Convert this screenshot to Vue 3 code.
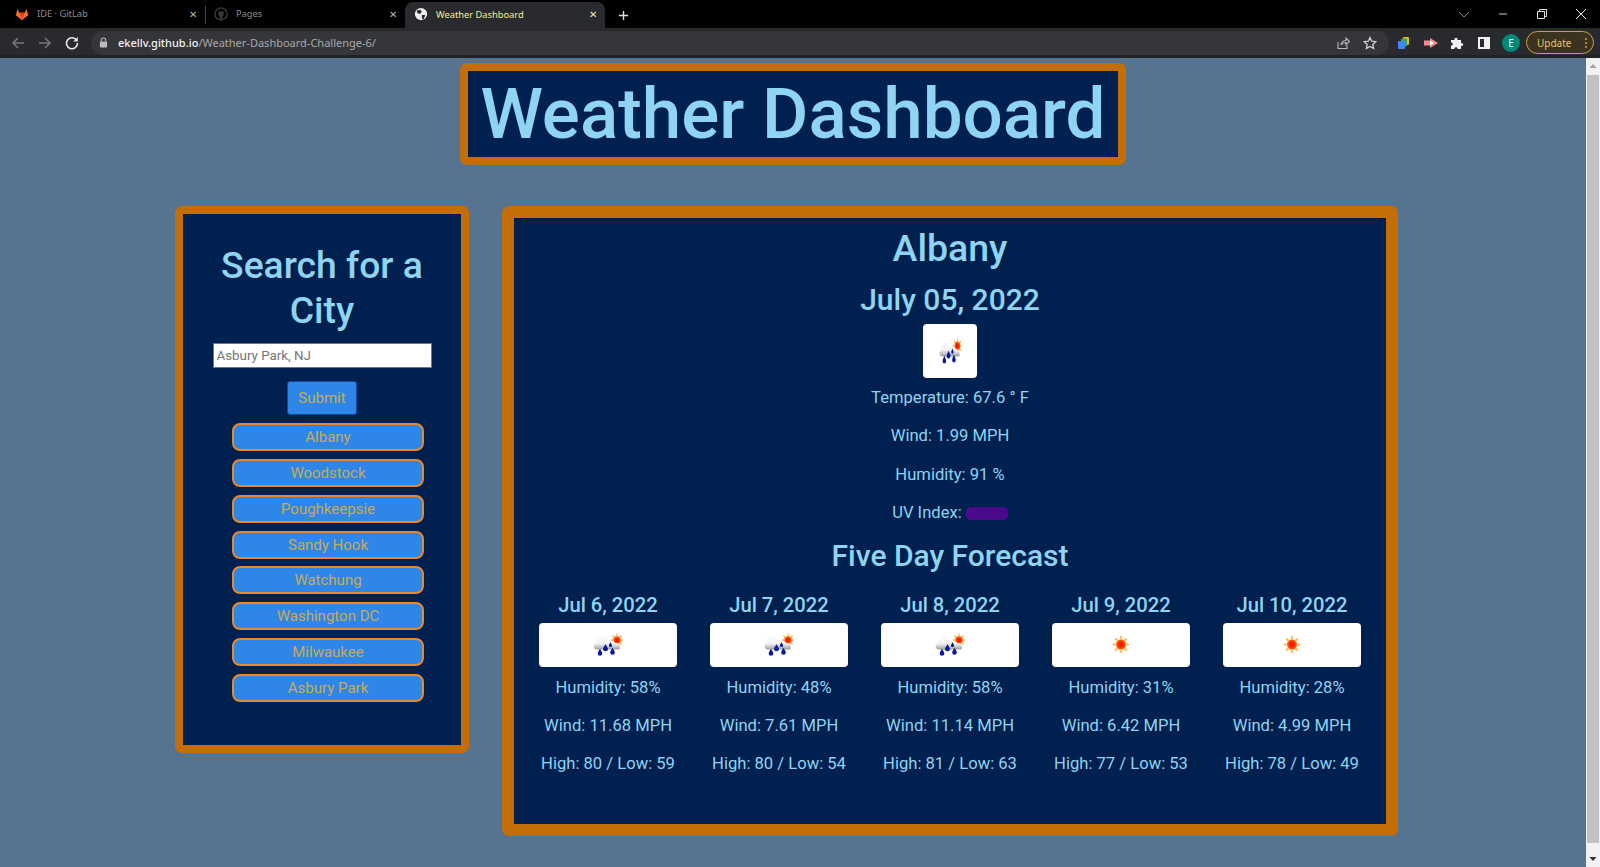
<template>
  <div class="window">
    <svg class="defs" width="0" height="0">
      <defs>
        <radialGradient id="sunFill">
          <stop offset="0.4" stop-color="#f51a00" />
          <stop offset="1" stop-color="#ff7a00" />
        </radialGradient>
        <linearGradient id="cloudFill" x1="0" y1="0" x2="0" y2="1">
          <stop offset="0" stop-color="#ffffff" />
          <stop offset="0.6" stop-color="#f0f0f0" />
          <stop offset="1" stop-color="#9c9c9c" />
        </linearGradient>
        <symbol id="sun" viewBox="0 0 18 18" preserveAspectRatio="none">
          <g fill="#ffb040">
            <path v-for="a in rays" :key="a" d="M9 0 L7.500 3.400 L10.500 3.400 Z" :transform="`rotate(${a} 9 9)`" />
          </g>
          <circle cx="9" cy="9" r="5" fill="url(#sunFill)" />
        </symbol>
        <symbol id="rain" viewBox="0 0 30 24" preserveAspectRatio="none">
          <g fill="#ffb040">
            <path v-for="a in rays" :key="a" d="M24 0 L22.800 2.800 L25.200 2.800 Z" :transform="`rotate(${a} 24 7)`" />
          </g>
          <circle cx="24" cy="7" r="3.800" fill="url(#sunFill)" />
          <path d="M4 16.500 C0 16.500 -0.500 11 3 10 C3 5 8 1 12 3 C14 4 15 6 15 8 C18 7 21 8 22 10 C26 10 28 13 26.500 16.500 Z" fill="url(#cloudFill)" />
          <g fill="#0a1a9c">
            <path d="M7 15.500 C7.500 17.500 9.300 18.500 9.300 20.500 C9.300 23.500 4.700 23.500 4.700 20.500 C4.700 18.500 6.500 17.500 7 15.500 Z" />
            <path d="M12.500 11 C13 13 15 14 15 16 C15 19 10 19 10 16 C10 14 12 13 12.500 11 Z" />
            <path d="M17.500 9 C17.800 10.500 19 11 19 12.500 C19 14.500 16 14.500 16 12.500 C16 11 17.200 10.500 17.500 9 Z" />
            <path d="M19.500 14.500 C20 16.500 21.800 17.500 21.800 19.500 C21.800 22.500 17.200 22.500 17.200 19.500 C17.200 17.500 19 16.500 19.500 14.500 Z" />
          </g>
        </symbol>
      </defs>
    </svg>

    <header class="chrome">
      <div class="tabstrip">
        <div class="tab">
          <svg class="favicon" viewBox="0 0 16 16">
            <path d="M8 15 L1 9.500 L2.800 2 L4.800 6.500 H11.200 L13.200 2 L15 9.500 Z" fill="#fc6d26" />
            <path d="M8 15 L4.800 6.500 H11.200 Z" fill="#e24329" />
          </svg>
          <span class="tab-title">IDE · GitLab</span>
          <span class="tab-close">✕</span>
        </div>
        <div class="tab-sep"></div>
        <div class="tab">
          <svg class="favicon" viewBox="0 0 16 16">
            <circle cx="8" cy="8" r="7" fill="none" stroke="#3a3a3a" stroke-width="1.600" />
            <path d="M5 4.500 L6.500 5.500 H9.500 L11 4.500 V7 C11.500 9 10 10.500 9.500 10.500 V14 H6.500 V10.500 C6 10.500 4.500 9 5 7 Z" fill="#3a3a3a" />
          </svg>
          <span class="tab-title">Pages</span>
          <span class="tab-close">✕</span>
        </div>
        <div class="tab active">
          <svg class="favicon" viewBox="0 0 16 16">
            <circle cx="8" cy="8" r="7" fill="#f1f1f1" />
            <path d="M3 4 L7 3 L9 5 L7 8 L4 7 Z M9 9 L13 9 L11 14 L9 13 Z" fill="#292929" />
          </svg>
          <span class="tab-title">Weather Dashboard</span>
          <span class="tab-close">✕</span>
        </div>
        <svg class="new-tab" viewBox="0 0 12 12"><path d="M6 1 V11 M1 6 H11" stroke="#e0e0e0" stroke-width="1.500" /></svg>
        <div class="window-controls">
          <svg viewBox="0 0 12 12"><path d="M1 4 L6 9 L11 4" fill="none" stroke="#8a8a8a" stroke-width="1" /></svg>
          <svg viewBox="0 0 12 12"><path d="M2 6 H10" stroke="#d0d0d0" stroke-width="1" /></svg>
          <svg viewBox="0 0 12 12"><path d="M1.500 3.500 H8.500 V10.500 H1.500 Z M3.500 3.500 V1.500 H10.500 V8.500 H8.500" fill="none" stroke="#e0e0e0" stroke-width="1" /></svg>
          <svg viewBox="0 0 12 12"><path d="M1 1 L11 11 M11 1 L1 11" stroke="#e8e8e8" stroke-width="1" /></svg>
        </div>
      </div>
      <div class="toolbar">
        <svg class="nav" viewBox="0 0 14 14"><path d="M13 7 H2 M7 2 L2 7 L7 12" fill="none" stroke="#777" stroke-width="1.500" /></svg>
        <svg class="nav" viewBox="0 0 14 14"><path d="M1 7 H12 M7 2 L12 7 L7 12" fill="none" stroke="#777" stroke-width="1.500" /></svg>
        <svg class="nav" viewBox="0 0 14 14"><path d="M11.800 4.500 A5.500 5.500 0 1 0 12.500 7" fill="none" stroke="#e8e8e8" stroke-width="1.600" /><path d="M12.800 1 V5.500 H8.300 Z" fill="#e8e8e8" /></svg>
        <div class="omnibox">
          <svg class="lock" viewBox="0 0 10 12"><path d="M2.500 5 V3.500 A2.500 2.500 0 0 1 7.500 3.500 V5" fill="none" stroke="#bbb" stroke-width="1.200" /><rect x="1" y="5" width="8" height="6.500" rx="1" fill="#bbb" /></svg>
          <span class="url"><b>ekellv.github.io</b>/Weather-Dashboard-Challenge-6/</span>
          <svg class="omni-icon share" viewBox="0 0 14 14"><path d="M2 6 V12.500 H11 V9 M5 9 C5.500 6 8 4.500 10 4.500 V2 L13.500 5.500 L10 8.500 V6.500 C8 6.500 6 7.500 5 9 Z" fill="none" stroke="#b8b8b8" stroke-width="1.100" /></svg>
          <svg class="omni-icon" viewBox="0 0 14 14"><path d="M7 1.500 L8.700 5.200 L12.800 5.700 L9.800 8.400 L10.600 12.400 L7 10.400 L3.400 12.400 L4.200 8.400 L1.200 5.700 L5.300 5.200 Z" fill="none" stroke="#d0d0d0" stroke-width="1.300" /></svg>
        </div>
        <div class="extensions">
          <svg viewBox="0 0 14 14">
            <rect x="6" y="1" width="6" height="8" rx="1" fill="#f2b90f" />
            <rect x="4" y="2.500" width="6" height="8" rx="1" fill="#34a853" />
            <rect x="1" y="5" width="7" height="8" rx="1" fill="#4285f4" />
          </svg>
          <svg viewBox="0 0 14 14"><path d="M0 4.500 H6 L6 2 L14 7 L6 12 V9.500 H0 Z" fill="#f28b8b" /><path d="M6 4.500 L10 7 L6 9.500 Z" fill="#fff" /></svg>
          <svg viewBox="0 0 14 14"><path d="M1 4 H4.500 C4 1 8 1 7.500 4 H11 V7 C14 6.500 14 10.500 11 10 V13 H7.500 C8 10.500 4 10.500 4.500 13 H1 V9.500 C3.500 10 3.500 6 1 6.500 Z" fill="#f1f1f1" /></svg>
          <svg viewBox="0 0 14 14"><rect x="1" y="1" width="12" height="12" fill="#f1f1f1" /><rect x="3" y="3" width="4" height="8" fill="#292a2d" /></svg>
          <span class="avatar">E</span>
        </div>
        <div class="update">
          <span>Update</span>
          <span class="dots"><i></i><i></i><i></i></span>
        </div>
      </div>
    </header>

    <div class="viewport">
      <main class="page">
        <h1 class="title">Weather Dashboard</h1>
        <div class="panels">
          <aside class="panel search">
            <h2 class="search-title">Search for a City</h2>
            <input class="city-input" type="text" placeholder="Asbury Park, NJ" />
            <button class="submit" type="button">Submit</button>
            <div class="history">
              <button v-for="city in cities" :key="city" class="city" type="button">{{ city }}</button>
            </div>
          </aside>
          <section class="panel weather">
            <h2 class="city-name">Albany</h2>
            <h3 class="today">July 05, 2022</h3>
            <div class="icon-box square"><svg class="wx"><use href="#rain" /></svg></div>
            <p>Temperature: 67.6 ° F</p>
            <p>Wind: 1.99 MPH</p>
            <p>Humidity: 91 %</p>
            <p>UV Index: <span class="uv"></span></p>
            <h3 class="five-day">Five Day Forecast</h3>
            <div class="forecast">
              <div v-for="day in days" :key="day.date" class="day">
                <h4>{{ day.date }}</h4>
                <div class="icon-box"><svg class="wx" :class="day.kind"><use :href="'#' + day.kind" /></svg></div>
                <p>Humidity: {{ day.humidity }}%</p>
                <p>Wind: {{ day.wind }} MPH</p>
                <p>High: {{ day.high }} / Low: {{ day.low }}</p>
              </div>
            </div>
          </section>
        </div>
      </main>
      <div class="scrollbar">
        <svg class="arrow" viewBox="0 0 14 17"><path d="M3.500 10 L7 6 L10.500 10 Z" fill="#a0a0a0" /></svg>
        <div class="thumb"></div>
        <svg class="arrow down" viewBox="0 0 14 17"><path d="M3.500 7 L7 11 L10.500 7 Z" fill="#303030" /></svg>
      </div>
    </div>
  </div>
</template>

<script setup>
const rays = [0, 45, 90, 135, 180, 225, 270, 315]

const cities = ['Albany', 'Woodstock', 'Poughkeepsie', 'Sandy Hook', 'Watchung', 'Washington DC', 'Milwaukee', 'Asbury Park']

const days = [
  { date: 'Jul 6, 2022', kind: 'rain', humidity: 58, wind: '11.68', high: 80, low: 59 },
  { date: 'Jul 7, 2022', kind: 'rain', humidity: 48, wind: '7.61', high: 80, low: 54 },
  { date: 'Jul 8, 2022', kind: 'rain', humidity: 58, wind: '11.14', high: 81, low: 63 },
  { date: 'Jul 9, 2022', kind: 'sun', humidity: 31, wind: '6.42', high: 77, low: 53 },
  { date: 'Jul 10, 2022', kind: 'sun', humidity: 28, wind: '4.99', high: 78, low: 49 }
]
</script>

<style>
html, body {
  margin: 0;
  overflow: hidden;
}
</style>

<style scoped>
.window {
  width: 1600px;
  height: 867px;
  display: flex;
  flex-direction: column;
  overflow: hidden;
  font-family: Roboto, "Liberation Sans", sans-serif;
}
.defs {
  position: absolute;
}

/* browser chrome */
.chrome {
  flex: none;
  height: 58px;
  background: #292a2d;
  border-bottom: 3px solid #222;
  box-sizing: border-box;
  font-family: "Noto Sans", "Liberation Sans", sans-serif;
}
.tabstrip {
  height: 28px;
  background: #000;
  display: flex;
  align-items: flex-end;
}
.tab {
  width: 200px;
  height: 26px;
  box-sizing: border-box;
  padding: 0 8px 3px 15px;
  display: flex;
  align-items: center;
  gap: 8px;
  color: #8f8f8f;
  font-size: 9.300px;
}
.tab:first-child {
  width: 205px;
}
.tab:nth-child(3) {
  width: 199px;
  padding-left: 8px;
}
.tab.active {
  width: 200px;
  padding: 0 8px 2px 9px;
  background: #292a2d;
  border-radius: 8px 8px 0 0;
  color: #f4ec9c;
}
.tab-sep {
  width: 1px;
  height: 18px;
  margin-bottom: 4px;
  background: #4a4a4a;
}
.favicon {
  width: 14px;
  height: 14px;
  flex: none;
}
.tab-title {
  flex: 1;
  white-space: nowrap;
}
.tab-close {
  font-size: 10px;
  color: #b5b5b5;
}
.active .tab-close {
  color: #f4ec9c;
}
.new-tab {
  width: 11px;
  height: 11px;
  margin: 0 0 7px 13px;
}
.window-controls {
  margin-left: auto;
  align-self: center;
  display: flex;
  gap: 27px;
  padding-right: 13px;
}
.window-controls svg {
  width: 12px;
  height: 12px;
}
.toolbar {
  height: 27px;
  padding: 2px 0 0 11px;
  box-sizing: border-box;
  display: flex;
  align-items: center;
}
.nav {
  width: 14px;
  height: 14px;
  margin-right: 13px;
}
.omnibox {
  width: 1298px;
  height: 24px;
  margin-left: -1px;
  box-sizing: border-box;
  padding: 0 12px 0 8px;
  background: #35363a;
  border-radius: 12px;
  display: flex;
  align-items: center;
  gap: 8px;
}
.lock {
  width: 9px;
  height: 11px;
}
.url {
  flex: 1;
  margin-left: 2px;
  font-size: 11px;
  color: #a8a8a8;
  white-space: nowrap;
}
.url b {
  font-weight: 500;
  color: #f2f2f2;
}
.omni-icon {
  width: 14px;
  height: 14px;
}
.omni-icon.share {
  margin-right: 5px;
}
.extensions {
  margin-left: 8px;
  display: flex;
  align-items: center;
  gap: 12.500px;
}
.extensions svg {
  width: 14px;
  height: 14px;
}
.avatar {
  width: 18px;
  height: 18px;
  margin-left: -1px;
  border-radius: 50%;
  background: #00897b;
  color: #e6f5f2;
  font-size: 10px;
  line-height: 18px;
  text-align: center;
}
.update {
  width: 68px;
  height: 23px;
  margin-left: 6px;
  box-sizing: border-box;
  border: 1px solid #c9a24a;
  border-radius: 12px;
  background: #3b3220;
  color: #ecc567;
  font-size: 10px;
  display: flex;
  align-items: center;
  justify-content: space-between;
  padding: 0 6px 0 10px;
}
.dots {
  display: flex;
  flex-direction: column;
  gap: 2px;
}
.dots i {
  width: 2px;
  height: 2px;
  border-radius: 50%;
  background: #f0a020;
}

/* page */
.viewport {
  flex: 1;
  min-height: 0;
  display: flex;
}
.page {
  flex: 1;
  background: #56748f;
  padding-top: 5px;
  color: #8fd4f0;
}
.title {
  width: 666px;
  height: 102px;
  margin: 0 auto;
  box-sizing: border-box;
  border: 8.500px solid #c46e0a;
  border-radius: 7px;
  background: #002050;
  font-size: 71px;
  font-weight: 500;
  line-height: 86px;
  text-align: center;
  white-space: nowrap;
}
.panels {
  display: flex;
  align-items: flex-start;
  gap: 33px;
  margin-top: 41px;
  padding-left: 175px;
}
.panel {
  box-sizing: border-box;
  background: #002050;
  border-style: solid;
  border-color: #c46e0a;
  border-radius: 7px;
}
.search {
  width: 294px;
  height: 547px;
  border-width: 8.500px;
  padding: 29px 27px 0;
  display: flex;
  flex-direction: column;
  align-items: center;
}
.search-title {
  margin: 0;
  width: 100%;
  font-size: 37.300px;
  font-weight: 500;
  line-height: 45px;
  text-align: center;
}
.city-input {
  width: 219px;
  height: 25px;
  margin-top: 10px;
  flex: none;
  box-sizing: border-box;
  padding: 0 3px;
  border: 1px solid #767676;
  background: #fff;
  font-family: inherit;
  font-size: 13.333px;
}
.city-input::placeholder {
  color: #757575;
}
.submit {
  width: 70px;
  height: 34px;
  margin-top: 13px;
  padding: 0;
  border: 1px solid #0a4a9a;
  border-radius: 3px;
  background: #2e86e8;
  color: #c8ab55;
  font-family: inherit;
  font-size: 15px;
}
.history {
  width: 192px;
  margin: 8px 0 0 12px;
  display: flex;
  flex-direction: column;
  gap: 7.850px;
}
.city {
  height: 28px;
  padding: 0;
  border: 2px solid #e8892a;
  border-radius: 8px;
  background: #2e86e8;
  color: #c8ab55;
  font-family: inherit;
  font-size: 15px;
  line-height: 22px;
}
.weather {
  width: 896px;
  height: 630px;
  border-width: 12.500px;
  padding: 8px 25px 0;
  text-align: center;
}
.weather p {
  margin: 0 0 14.400px;
  font-size: 16.600px;
  line-height: 24px;
}
.city-name {
  margin: 0;
  font-size: 37.500px;
  font-weight: 500;
  line-height: 44px;
}
.today {
  margin: 8px 0 0;
  font-size: 30px;
  font-weight: 500;
  line-height: 44px;
}
.icon-box {
  height: 44px;
  background: #fff;
  border-radius: 4px;
  display: flex;
  align-items: center;
  justify-content: center;
}
.icon-box.square {
  width: 54px;
  height: 54px;
  margin: 2px auto 8px;
}
.wx {
  width: 23px;
  height: 27px;
  flex: none;
}
.wx.rain {
  width: 30px;
  height: 24px;
}
.wx.sun {
  width: 18px;
  height: 19px;
}
.uv {
  display: inline-block;
  width: 42px;
  height: 13px;
  border-radius: 5px;
  background: #4b0a8c;
  vertical-align: -2px;
}
.five-day {
  margin: -6px 0 0;
  font-size: 30px;
  font-weight: 500;
  line-height: 44px;
}
.forecast {
  display: grid;
  grid-template-columns: repeat(5, 138px);
  justify-content: space-between;
  margin-top: 15px;
}
.day h4 {
  margin: 0 0 6px;
  font-size: 20.200px;
  font-weight: 500;
  line-height: 24px;
  white-space: nowrap;
}
.day .icon-box {
  margin-bottom: 9px;
}
.day p {
  white-space: nowrap;
}

.scrollbar {
  flex: none;
  width: 14px;
  background: #f1f1f1;
  display: flex;
  flex-direction: column;
  align-items: center;
}
.arrow {
  width: 14px;
  height: 17px;
  flex: none;
}
.thumb {
  flex: none;
  width: 12px;
  height: 768px;
  background: #c1c1c1;
}
.arrow.down {
  margin-top: auto;
}
</style>
